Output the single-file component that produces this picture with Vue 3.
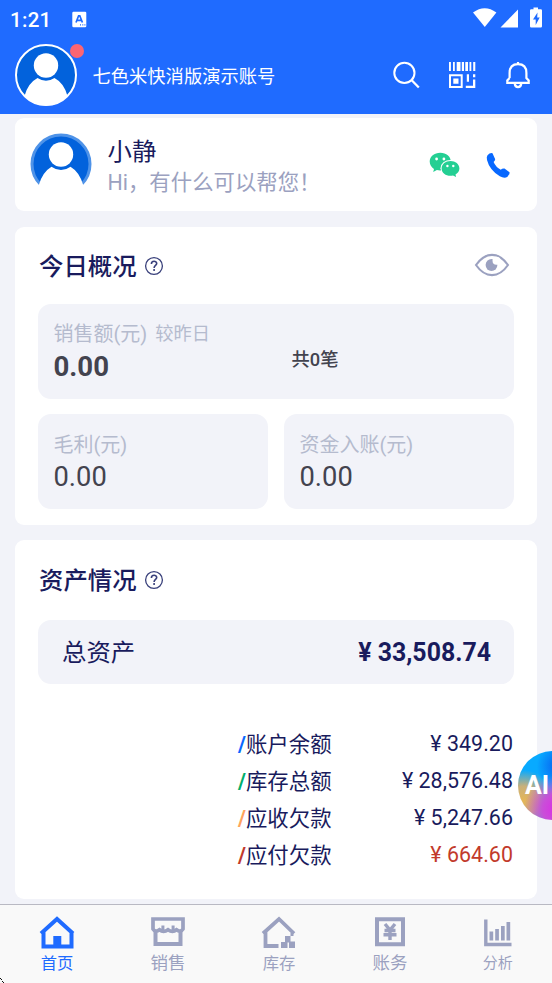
<script setup>
const metrics = [
  { label: '毛利(元)', value: '0.00' },
  { label: '资金入账(元)', value: '0.00' },
]
const assets = [
  { label: '账户余额', value: '349.20', tone: 'blue' },
  { label: '库存总额', value: '28,576.48', tone: 'green' },
  { label: '应收欠款', value: '5,247.66', tone: 'orange' },
  { label: '应付欠款', value: '664.60', tone: 'red' },
]
const tabs = [
  { key: 'home', label: '首页' },
  { key: 'sales', label: '销售' },
  { key: 'stock', label: '库存' },
  { key: 'money', label: '账务' },
  { key: 'chart', label: '分析' },
]
</script>

<template>
  <div class="screen">
    <header class="top">
      <div class="status">
        <span class="clock">1:21</span>
        <svg class="ime" width="15" height="17" viewBox="0 0 15 17">
          <rect x="0.3" y="0.7" width="14" height="15.6" rx="1.2" fill="#fff" />
          <path d="M4 11.5 6.6 4.8h1.2l2.6 6.7M5 9.3h4.5" fill="none" stroke="#1f6bff" stroke-width="1.7" />
          <path d="M8 13.8h1M10.300 13.800h1M12.400 13.800h1" stroke="#1f6bff" stroke-width="1.2" />
        </svg>
        <svg class="signals" width="70" height="22" viewBox="0 0 70 22">
          <path d="M0 5.500Q11.700-3 23.400 5.500L11.800 20Z" fill="#fff" />
          <path d="M45 2.500V20.500H27.500Z" fill="#fff" />
          <path d="M60.500 0.500h4.500v1.800h2.800q1.200 0 1.200 1.200v15.800q0 1.200-1.200 1.200h-9.600q-1.200 0-1.200-1.200V3.500q0-1.200 1.200-1.200h2.300Z" fill="#fff" />
          <path d="M64.500 5.500 60 12.500h2.700v5.500l4-7.500h-2.500Z" fill="#1f6bff" />
        </svg>
      </div>
      <div class="account">
        <div class="avatar">
          <svg width="62" height="62" viewBox="0 0 62 62">
            <circle cx="31" cy="31" r="29.800" fill="#0262dc" />
            <path d="M9.500 52Q13 39 22.500 34Q31 39.500 39.500 34Q49 39 52.500 52Q44 61.500 31 61.500Q18 61.500 9.500 52Z" fill="#fff" />
            <circle cx="31" cy="21.500" r="12.200" fill="#fff" />
            <circle cx="31" cy="31" r="30" fill="none" stroke="#fff" stroke-width="2" />
          </svg>
          <i class="dot"></i>
        </div>
        <span class="account-name">七色米快消版演示账号</span>
        <div class="tools">
          <svg width="28" height="28" viewBox="0 0 28 28" fill="none" stroke="#fff" stroke-width="2">
            <circle cx="12.400" cy="11.900" r="10.100" />
            <path d="m19.500 19 7.300 7.500" stroke-width="2.300" />
          </svg>
          <svg width="28" height="28" viewBox="0 0 28 28" fill="#fff">
            <path d="M1 1h1.900v9H1zM5 1h1.800v9H5zM8.700 1h3.800v9H8.700zM13.800 1h2.200v9h-2.200zM17.300 1h2.700v9h-2.700zM21.500 1h1.800v9h-1.800zM25.200 1h2.100v9h-2.100z" />
            <path d="M2 14.200h11.700v11.700H2z" fill="none" stroke="#fff" stroke-width="2" />
            <path d="M5.300 17.500h5.200v5.200H5.300zM18.800 13.300h2.200v7.500h-2.200zM25 13.300h2.300v3H25zM25 18.400h2.300v8.500h-9.500v-2.200H25z" />
          </svg>
          <svg width="28" height="28" viewBox="0 0 28 28" fill="none" stroke="#fff" stroke-width="2.200">
            <path d="M5.600 17V12Q5.600 3.200 14 3.200T22.400 12V17L24.700 19.500V21.800H3.300V19.500L5.600 17M14 3.200V1M10.700 22.500q.5 3.700 3.300 3.700t3.300-3.700" />
          </svg>
        </div>
      </div>
    </header>

    <section class="card helper">
      <svg width="62" height="62" viewBox="0 0 62 62">
        <circle cx="31" cy="31" r="29" fill="#0262dc" stroke="#4f93e8" stroke-width="3" />
        <path d="M0 62 8.800 52Q12.500 39 21.500 33.700Q31 40.500 40.500 33.700Q49.500 39 53.200 52L62 62Z" fill="#fff" />
        <circle cx="31" cy="21.500" r="12.200" fill="#fff" />
      </svg>
      <div class="helper-text">
        <div class="helper-name">小静</div>
        <div class="helper-msg">Hi，有什么可以帮您！</div>
      </div>
      <svg class="wechat" width="32" height="26" viewBox="0 0 32 26">
        <path d="M11.300 0.800C5.300.8.700 4.600.7 9.600c0 3.100 1.700 5.700 4.300 7.300l-.8 3 3.700-1.800c6.600 1.600 13.900-2 13.900-8.500 0-5-4.500-8.800-10.500-8.800Z" fill="#24cf93" />
        <ellipse cx="21.500" cy="16.300" rx="10" ry="8.400" fill="#fff" />
        <path d="M21.500 9c-5 0-8.900 3.200-8.900 7.400 0 5 5.500 8.400 11.400 7.100l3.100 1.500-.6-2.600c2.400-1.400 3.900-3.500 3.900-6 0-4.200-3.900-7.400-8.900-7.400Z" fill="#24cf93" />
        <g fill="#fff"><circle cx="7.600" cy="7" r="1.400" /><circle cx="14.900" cy="7" r="1.400" /><circle cx="18.400" cy="14" r="1.200" /><circle cx="24.300" cy="14" r="1.200" /></g>
      </svg>
      <svg class="phone" width="25" height="27" viewBox="0 0 25 27">
        <path d="M1.500 3.200Q4 .5 6.500 1.200L9.200 7.200Q9 9 7.600 9.900Q9.800 15 14.800 17.800Q16 16.300 18.500 16.500L23.500 20.300Q24 22.500 21.500 24.700Q18.500 27 13.800 24.300Q3.500 18 1 8Q.3 4.700 1.500 3.200Z" fill="#0868ff" />
      </svg>
    </section>

    <section class="card today">
      <div class="heading">
        <h2>今日概况</h2>
        <svg class="help" width="20" height="20" viewBox="0 0 20 20" fill="none" stroke="#39407b">
          <circle cx="10" cy="10" r="8.400" stroke-width="1.300" />
          <path d="M7.400 8.100C7.400 4.300 12.700 4.400 12.700 7.600C12.700 9.500 10.100 9.500 10.100 11.900M10.100 13.100V14.900" stroke-width="1.600" />
        </svg>
        <svg class="eye" width="36" height="24" viewBox="0 0 36 24">
          <path d="M2 12Q9 1.900 18 1.900T34 12Q27 22.100 18 22.100T2 12Z" fill="none" stroke="#9ba1c0" stroke-width="2.100" />
          <circle cx="17.500" cy="12" r="5.900" fill="#9ba1c0" />
          <circle cx="22.500" cy="7.800" r="4" fill="#fff" />
        </svg>
      </div>
      <div class="panel sales">
        <div class="metric">
          <div class="label">销售额(元)<span class="compare">较昨日</span></div>
          <div class="value strong">0.00</div>
        </div>
        <div class="count">共0笔</div>
      </div>
      <div class="pair">
        <div v-for="m in metrics" :key="m.label" class="panel metric">
          <div class="label">{{ m.label }}</div>
          <div class="value">{{ m.value }}</div>
        </div>
      </div>
    </section>

    <section class="card wealth">
      <div class="heading">
        <h2>资产情况</h2>
        <svg class="help" width="20" height="20" viewBox="0 0 20 20" fill="none" stroke="#39407b">
          <circle cx="10" cy="10" r="8.400" stroke-width="1.300" />
          <path d="M7.400 8.100C7.400 4.300 12.700 4.400 12.700 7.600C12.700 9.500 10.100 9.500 10.100 11.900M10.100 13.100V14.900" stroke-width="1.600" />
        </svg>
      </div>
      <div class="panel total"><span>总资产</span><strong>¥ 33,508.74</strong></div>
      <ul class="assets">
        <li v-for="a in assets" :key="a.label" :class="a.tone">
          <span class="name"><i>/</i>{{ a.label }}</span><span class="amount">¥ {{ a.value }}</span>
        </li>
      </ul>
    </section>

    <div class="ai"><span>AI</span></div>

    <nav class="tabs">
      <a v-for="t in tabs" :key="t.key" :class="['tab', t.key]">
        <svg width="36" height="34" viewBox="0 0 36 34">
          <g v-if="t.key === 'home'">
            <path d="M2 17.500 18 3 34 17.500M4.500 16V30.500H32.500V16" fill="none" stroke="currentColor" stroke-width="4" />
            <path d="M14.300 20h8v11h-8z" fill="currentColor" />
          </g>
          <g v-else-if="t.key === 'sales'" fill="none" stroke="currentColor" stroke-width="4">
            <path d="M5.500 15V28H30.500V15" />
            <path d="M3 3H33V13Q30.500 17 26.500 13.800Q22.500 17 18 13.800Q13.500 17 9.500 13.800Q5.500 17 3 13Z" stroke-width="3.700" />
            <path d="M12.900 9.500v5M23.100 9.500v5" stroke-width="3" />
          </g>
          <g v-else-if="t.key === 'stock'">
            <path d="M2 17.500 18 3 33 17.500M4.500 16V30H17.500" fill="none" stroke="currentColor" stroke-width="3.800" />
            <path d="M24 20h5.500v5.500H34V32h-6v-5.500h-1.500V32H20v-6h4zM29.500 17h3v3h-3z" fill="currentColor" />
          </g>
          <g v-else-if="t.key === 'money'" fill="none" stroke="currentColor">
            <path d="M5 3.200H31V28.200H5Z" stroke-width="4" />
            <path d="m13 8 5 6 5-6M12.500 14.500h11M11.500 18.800h13M18 13v11" stroke-width="3.400" />
          </g>
          <g v-else>
            <path d="M5.800 3.500V28.500H31.500" fill="none" stroke="currentColor" stroke-width="3.400" />
            <path d="M9.500 15.500h3.700v9H9.500zM15.200 13h3.700v11.500h-3.700zM21 10h3.700v14.500H21zM26.500 6h3.700v18.500h-3.700z" fill="currentColor" />
          </g>
        </svg>
        <span>{{ t.label }}</span>
      </a>
    </nav>
    <svg class="corner" width="5" height="5" viewBox="0 0 5 5"><path d="M0 0h1v1H0zM1 1h1v1H1zM2 3h1v1H2zM3 4h1v1H3z" fill="#111" /></svg>
  </div>
</template>

<style>
body { margin: 0; overflow: hidden; background: #f2f3f9; }
</style>

<style scoped>
.screen { position: relative; width: 552px; height: 983px; overflow: hidden; display: flex; flex-direction: column; background: #f2f3f9; color: #191b5d; font-family: Roboto, "Noto Sans CJK SC", sans-serif; }
svg { display: block; flex: none; }
.top { height: 113.500px; flex: none; background: #1f6bff; color: #fff; margin-bottom: 4.500px; }
.status { height: 38px; display: flex; align-items: center; padding: 0 9px 0 10px; }
.clock { width: 62px; font-size: 20.500px; font-weight: 500; letter-spacing: .3px; padding-top: 1px; }
.signals { margin-left: auto; margin-top: -2px; }
.account { height: 74px; display: flex; align-items: center; padding: 0 20.500px 0 15px; }
.avatar { position: relative; width: 62px; }
.dot { position: absolute; right: -7px; top: 0; width: 14px; height: 14px; border-radius: 50%; background: #fb6573; }
.account-name { margin-left: 15.500px; padding-top: 3px; font-size: 18.300px; line-height: 26px; }
.tools { margin-left: auto; display: flex; gap: 28px; }
.card { box-sizing: border-box; width: 522px; margin: 0 0 0 15px; flex: none; background: #fff; border-radius: 9px; }
.helper { height: 93px; display: flex; padding: 15px 26.500px 0 15px; }
.helper-text { margin-left: 15.500px; padding-top: 3px; }
.helper-name { font-size: 24.400px; line-height: 31px; }
.helper-msg { font-size: 21.400px; line-height: 32px; color: #9ba1c0; white-space: nowrap; }
.wechat { margin: 18.500px 0 0 auto; }
.phone { margin: 18.500px 0 0 25px; }
.today { height: 298px; margin-top: 16px; padding: 0 23px; }
.heading { height: 77px; display: flex; align-items: center; }
.heading h2 { margin: 0; padding: 2px 0 0 1px; font-size: 24.400px; line-height: 36px; font-weight: 500; }
.help { margin-left: 7px; }
.eye { margin-left: auto; margin-right: 4px; margin-top: -1px; }
.panel { box-sizing: border-box; background: #f2f3f9; border-radius: 13px; }
.sales { display: flex; height: 95px; }
.metric { height: 95px; box-sizing: border-box; padding: 15px 15.500px; }
.label { font-size: 20px; line-height: 30px; color: #b5bbce; white-space: nowrap; }
.compare { position: relative; top: -1.500px; font-size: 18.300px; margin-left: 8px; }
.value { color: #43434f; font-size: 27.300px; line-height: 34px; }
.value.strong { font-weight: 700; font-size: 27.600px; }
.pair .metric { padding-top: 16px; }
.sales .metric { width: 253.500px; }
.count { padding-top: 43px; font-size: 18.300px; line-height: 26px; font-weight: 500; color: #43434f; }
.pair { display: grid; grid-template-columns: 1fr 1fr; gap: 16px; margin-top: 15px; }
.wealth { height: 358.500px; margin-top: 15px; padding: 0 23px; }
.wealth .heading { height: 79.500px; }
.total { height: 64px; padding: 0 23px 0 24px; display: flex; align-items: center; justify-content: space-between; font-size: 24.400px; }
.total strong { font-size: 24.900px; font-weight: 700; padding-top: 2px; }
.total span { padding-bottom: 2px; }
.assets { list-style: none; margin: 41px 1px 0 200px; padding: 0; font-size: 21.400px; }
.assets li { height: 37px; display: flex; align-items: center; justify-content: space-between; white-space: nowrap; }
.assets .name { padding-bottom: 1px; }
.assets .amount { padding-top: 1px; letter-spacing: .05px; }
.assets i { font-style: normal; font-weight: 700; }
.blue i { color: #0868ff; }
.green i { color: #00ae6b; }
.orange i { color: #ffa45c; }
.red i, .red .amount { color: #c23a2b; }
.ai { position: absolute; left: 518px; top: 751px; width: 69px; height: 69px; border-radius: 50%; color: #fff; background: radial-gradient(circle at 58% 84%, #dd28e7 0, #c94fd8 22%, transparent 48%), radial-gradient(circle at 8% 72%, #e5b657 0, #c9b07a 18%, transparent 38%), radial-gradient(circle at 62% 22%, #0754ef 0, transparent 35%), #08aaff; }
.ai span { display: block; padding-left: 7px; font-size: 25px; line-height: 70px; font-weight: 700; }
.tabs { position: absolute; left: 0; right: 0; bottom: 0; height: 78px; padding-left: 1.500px; display: grid; grid-template-columns: repeat(4, 111px) 1fr; border-top: 1px solid #b9b9c3; background: #f9f9f9; box-sizing: content-box; }
.tab { display: flex; flex-direction: column; align-items: center; padding-top: 11px; color: #9ba1c0; font-size: 16.300px; }
.tab span { line-height: 27px; }
.tab.home { color: #1f6bff; }
.sales.tab, .tab.money { font-size: 17.500px; height: auto; }
.tab.chart { font-size: 15px; padding-right: 2px; }
.corner { position: absolute; left: 0; bottom: 0; }
</style>
